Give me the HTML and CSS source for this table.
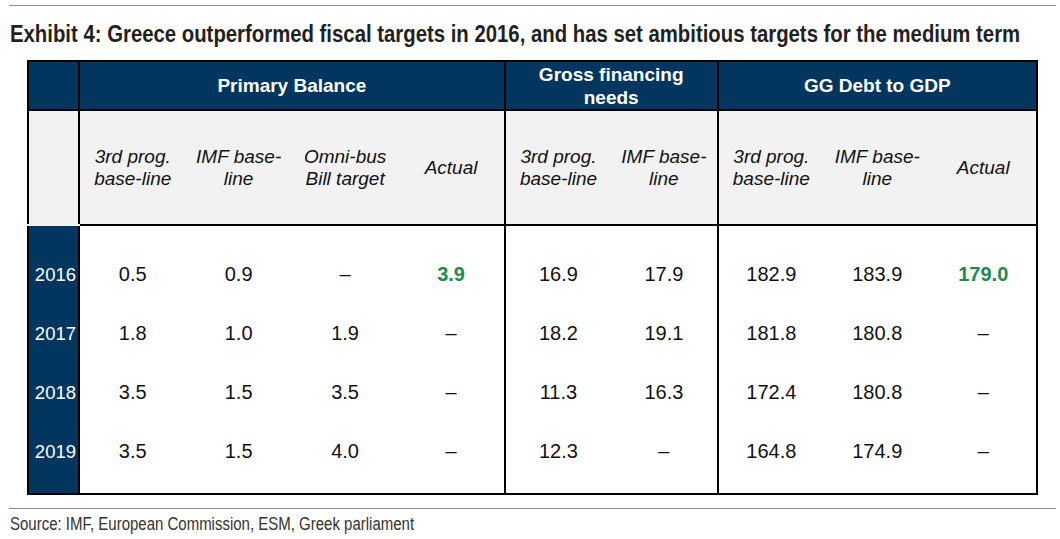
FILE: index.html
```html
<!DOCTYPE html>
<html>
<head>
<meta charset="utf-8">
<link rel="stylesheet" href="styles.css">
</head>
<body>
<div class="page">
  <div class="rule"></div>
  <h1 class="title"><span class="narrow">Exhibit 4: Greece outperformed fiscal targets in 2016, and has set ambitious targets for the medium term</span></h1>
  <table class="exhibit">
    <colgroup>
      <col class="c-year">
      <col span="9" class="c-data">
    </colgroup>
    <thead>
      <tr class="group-row">
        <th class="year-head"></th>
        <th colspan="4" class="sep">Primary Balance</th>
        <th colspan="2" class="sep">Gross financing<br>needs</th>
        <th colspan="3">GG Debt to GDP</th>
      </tr>
      <tr class="sub-row">
        <th class="year-sub"></th>
        <th>3rd prog.<br>base-line</th>
        <th>IMF base-<br>line</th>
        <th>Omni-bus<br>Bill target</th>
        <th class="sep">Actual</th>
        <th>3rd prog.<br>base-line</th>
        <th class="sep">IMF base-<br>line</th>
        <th>3rd prog.<br>base-line</th>
        <th>IMF base-<br>line</th>
        <th>Actual</th>
      </tr>
    </thead>
    <tbody>
      <tr class="first">
        <th class="year">2016</th>
        <td>0.5</td><td>0.9</td><td>–</td><td class="sep good">3.9</td>
        <td>16.9</td><td class="sep">17.9</td>
        <td>182.9</td><td>183.9</td><td class="good">179.0</td>
      </tr>
      <tr>
        <th class="year">2017</th>
        <td>1.8</td><td>1.0</td><td>1.9</td><td class="sep">–</td>
        <td>18.2</td><td class="sep">19.1</td>
        <td>181.8</td><td>180.8</td><td>–</td>
      </tr>
      <tr>
        <th class="year">2018</th>
        <td>3.5</td><td>1.5</td><td>3.5</td><td class="sep">–</td>
        <td>11.3</td><td class="sep">16.3</td>
        <td>172.4</td><td>180.8</td><td>–</td>
      </tr>
      <tr class="last">
        <th class="year">2019</th>
        <td>3.5</td><td>1.5</td><td>4.0</td><td class="sep">–</td>
        <td>12.3</td><td class="sep">–</td>
        <td>164.8</td><td>174.9</td><td>–</td>
      </tr>
    </tbody>
  </table>
  <div class="rule bottom"></div>
  <p class="source"><span class="narrow">Source: IMF, European Commission, ESM, Greek parliament</span></p>
</div>
</body>
</html>
```

FILE: styles.css
```css
html, body {
  margin: 0;
  padding: 0;
  background: #ffffff;
  overflow: hidden;
}

.page {
  padding: 5px 4px 0 9px;
  width: 1047px;
}

.rule {
  height: 1px;
  background: #8c8c8c;
}

.narrow {
  display: inline-block;
  white-space: nowrap;
  transform: scaleX(0.82);
  transform-origin: 0 50%;
}

.title {
  margin: 14px 0 0 1px;
  font-family: "Liberation Sans", Arial, sans-serif;
  font-weight: bold;
  font-size: 24.8px;
  line-height: 28px;
  color: #231f20;
  white-space: nowrap;
  overflow: hidden;
}

.exhibit {
  margin: 12px 0 0 18px;
  width: 1011px;
  border-collapse: collapse;
  border: 2px solid #000;
  table-layout: fixed;
  font-family: "Liberation Sans", Arial, sans-serif;
  color: #111;
}

.c-year { width: 51px; }

.exhibit th,
.exhibit td {
  padding: 0;
  text-align: center;
  vertical-align: middle;
}

.group-row th {
  background: #02365f;
  color: #ffffff;
  font-weight: bold;
  font-size: 19px;
  line-height: 23px;
  height: 47px;
  border-bottom: 2px solid #000;
}

.year-head {
  border-right: 2px solid #000;
}

.sub-row th {
  background: #f2f2f2;
  font-style: italic;
  font-weight: normal;
  font-size: 19px;
  line-height: 22px;
  height: 113px;
  color: #111;
  border-bottom: 2px solid #000;
}

.sub-row th.year-sub {
  border-right: 2px solid #000;
  border-bottom-color: #f2f2f2;
}

.exhibit .sep {
  border-right: 2px solid #000;
}

tbody td {
  font-size: 20px;
  height: 59px;
  color: #111;
}

tbody .year {
  background: #02365f;
  color: #ffffff;
  font-weight: normal;
  font-size: 18.5px;
  text-align: right;
  padding-right: 2px;
  border-right: 2px solid #000;
}

tbody tr.first td,
tbody tr.first th {
  height: 59px;
  padding-top: 19px;
}

tbody tr.last td,
tbody tr.last th {
  padding-bottom: 12px;
}

.good {
  color: #23884f;
  font-weight: bold;
}

.rule.bottom {
  margin-top: 13px;
  width: 1047px;
}

.source {
  margin: 5px 0 0 1px;
  font-family: "Liberation Sans", Arial, sans-serif;
  font-size: 18.3px;
  line-height: 20px;
  color: #333;
  white-space: nowrap;
  overflow: hidden;
}
```
